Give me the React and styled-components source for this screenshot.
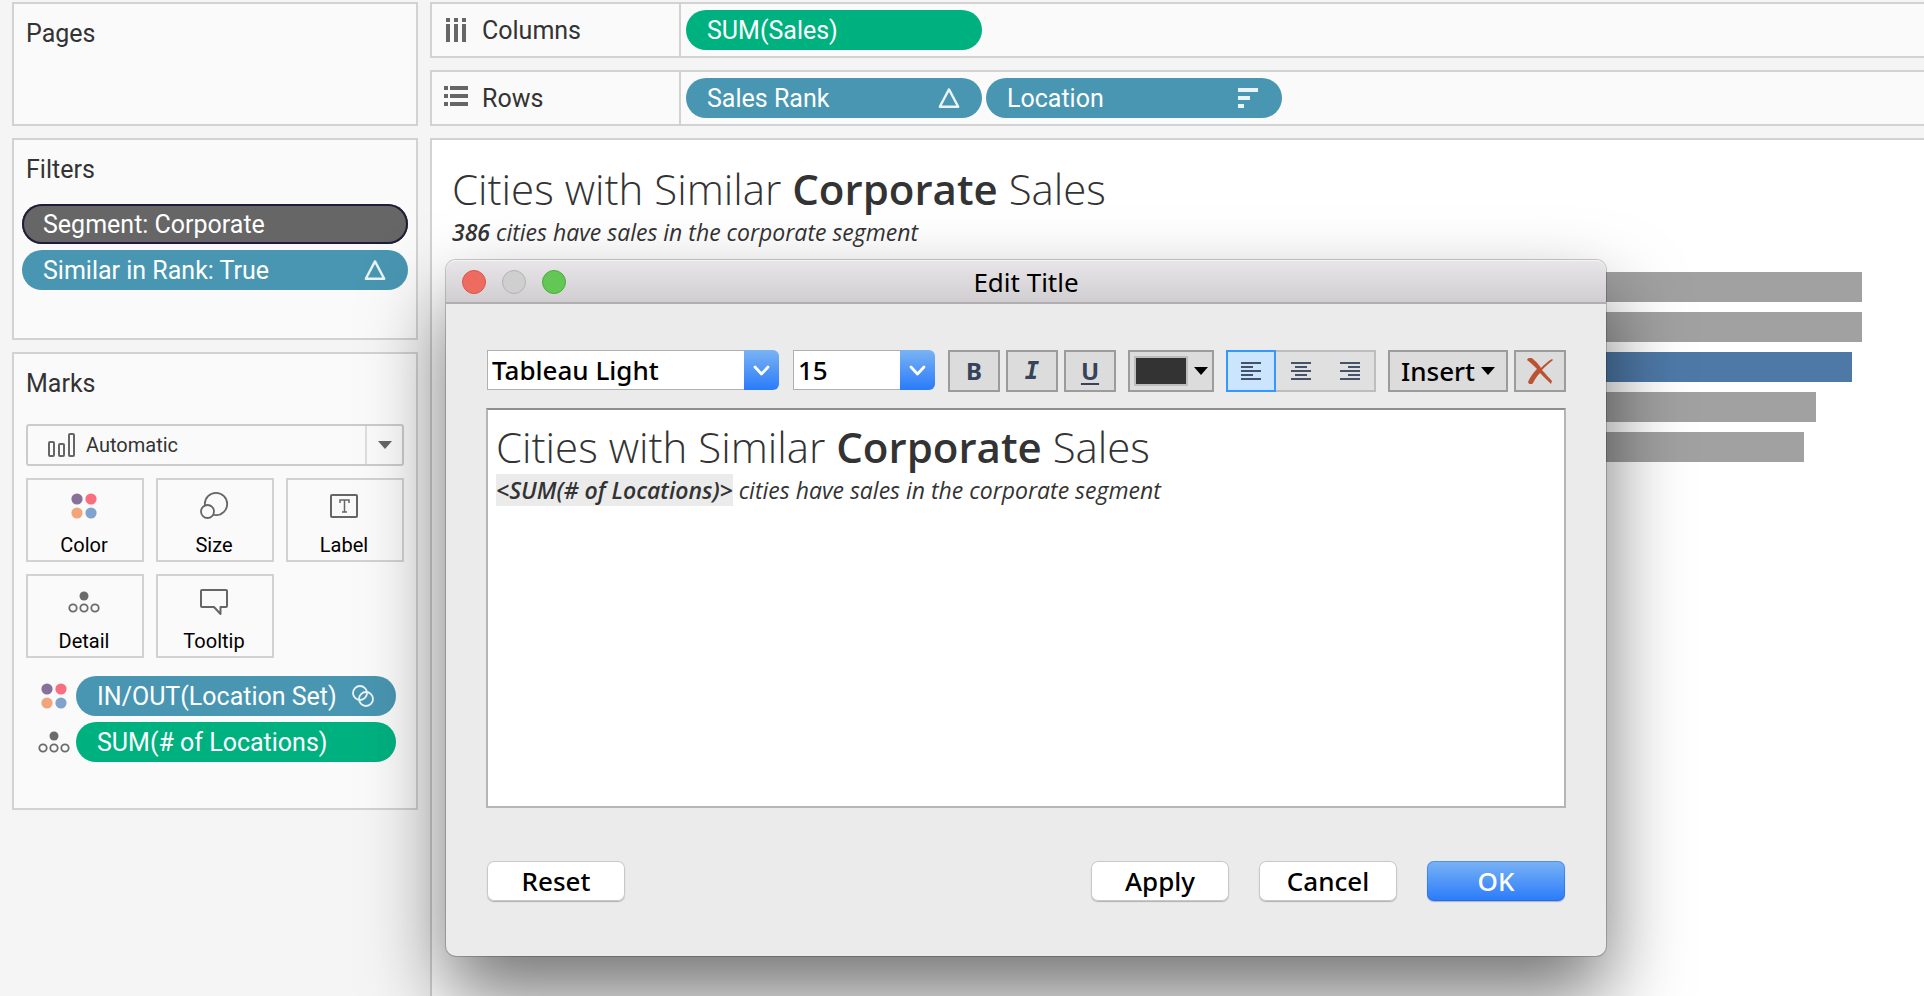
import React, { useState } from "react";
import styled, { createGlobalStyle, css } from "styled-components";

const uiFont = `"Noto Sans", "Open Sans", sans-serif`;
const shelfFont = `Roboto, "Liberation Sans", sans-serif`;

const GlobalStyle = createGlobalStyle`
    * {
        box-sizing: border-box;
    }
    body {
        margin: 0;
        background-color: #f5f5f5;
        color: #333333;
        font-family: ${shelfFont};
    }
    button, select {
        margin: 0;
        padding: 0;
        border: none;
        background: none;
        font: inherit;
        color: inherit;
        cursor: pointer;
    }
`

const Sworkspace = styled.div`
    display: flex;
    gap: 12px;
    min-height: 100vh;
    padding: 2px 0 0 12px;
    overflow: hidden;
`

const Ssidebar = styled.aside`
    display: flex;
    flex-direction: column;
    flex: none;
    gap: 12px;
    width: 406px;
`

const Scard = styled.section`
    min-height: ${(p) => p.$height};
    padding: 14px 12px 12px;
    border: 2px solid #d2d2d2;
    background-color: #fafafa;
`

const ScardTitle = styled.h2`
    margin: 0;
    font-size: 25px;
    font-weight: 400;
    line-height: 32px;
`

const SpillList = styled.div`
    display: flex;
    flex-direction: column;
    gap: 6px;
    margin: 18px -4px 0;
`

const pillColors = {
    blue: '#4996b2',
    green: '#00b180',
    gray: '#666666',
}

const Spill = styled.button`
    display: flex;
    align-items: center;
    justify-content: space-between;
    width: ${(p) => p.$width || '100%'};
    height: 40px;
    padding: 0 22px 0 21px;
    border-radius: 20px;
    background-color: ${(p) => pillColors[p.$tone]};
    color: white;
    font-size: 25px;
    white-space: nowrap;
    ${(p) => p.$selected && css`
        box-shadow: inset 0 0 0 2px #221c3a;
    `}
`

const SmarkType = styled.label`
    display: flex;
    align-items: center;
    height: 42px;
    margin-top: 24px;
    padding-left: 20px;
    border: 2px solid #cbcbcb;
    border-radius: 3px;
    font-size: 20px;
`

const SmarkSelect = styled.select`
    flex: 1;
    height: 38px;
    margin-left: 10px;
    appearance: none;
    outline: none;
`

const SmarkArrow = styled.span`
    display: flex;
    align-items: center;
    justify-content: center;
    width: 37px;
    height: 38px;
    border-left: 2px solid #dedede;
`

const SmarkGrid = styled.div`
    display: grid;
    grid-template-columns: repeat(3, 1fr);
    gap: 12px;
    margin-top: 12px;
`

const SmarkButton = styled.button`
    display: flex;
    flex-direction: column;
    align-items: center;
    justify-content: space-between;
    height: 84px;
    padding: 10px 2px 2px 0;
    border: 2px solid #d2d2d2;
    color: black;
    font-size: 20px;
    line-height: 26px;
`

const SencodingList = styled.div`
    display: flex;
    flex-direction: column;
    gap: 6px;
    margin-top: 18px;
    padding: 0 8px 0 12px;
`

const Sencoding = styled.div`
    display: flex;
    align-items: center;
    gap: 6px;
`

const Smain = styled.main`
    display: flex;
    flex: 1;
    flex-direction: column;
    gap: 12px;
    min-width: 0;
`

const Sshelf = styled.div`
    display: flex;
    height: 56px;
    border: 2px solid #d2d2d2;
    border-right: none;
    background-color: #fafafa;
`

const SshelfLabel = styled.div`
    display: flex;
    align-items: center;
    gap: 14px;
    width: 249px;
    padding-left: 12px;
    border-right: 2px solid #d2d2d2;
    font-size: 25px;
`

const SshelfPills = styled.div`
    display: flex;
    align-items: center;
    gap: 4px;
    padding-left: 5px;
`

const Sview = styled.section`
    flex: 1;
    padding: 21px 62px 0 20px;
    border: 2px solid #d2d2d2;
    border-right: none;
    border-bottom: none;
    background-color: white;
`

const Sheadline = styled.h1`
    margin: 0;
    font-family: "Open Sans", sans-serif;
    font-size: 42px;
    font-weight: 300;
    line-height: 56px;
    white-space: nowrap;
    b {
        font-weight: 600;
    }
`

const Ssubline = styled.p`
    margin: 0;
    font-family: "Open Sans", sans-serif;
    font-size: 23px;
    font-style: italic;
    font-weight: 400;
    line-height: 30px;
    white-space: nowrap;
    b {
        font-weight: 600;
    }
`

const Sfield = styled.b`
    background-color: #ebebeb;
`

const Schart = styled.div`
    display: flex;
    flex-direction: column;
    gap: 10px;
    margin-top: 25px;
`

const Sbar = styled.div`
    height: 30px;
    background-color: ${(p) => p.$inSet ? '#4e79a7' : '#a1a1a1'};
`

const Sdialog = styled.div`
    position: absolute;
    top: 260px;
    left: 446px;
    width: 1160px;
    max-width: calc(100vw - 460px);
    border-radius: 10px;
    background-color: #ebebeb;
    box-shadow: 0 0 0 1px rgba(0, 0, 0, 0.2), 0 40px 80px rgba(0, 0, 0, 0.55);
    color: black;
    font-family: ${uiFont};
    font-size: 26px;
    font-weight: 500;
`

const StitleBar = styled.header`
    display: grid;
    grid-template-columns: 1fr auto 1fr;
    align-items: center;
    height: 44px;
    padding: 2px 16px 0;
    border-bottom: 2px solid #b1aeb1;
    border-radius: 10px 10px 0 0;
    background: linear-gradient(#e9e6e9, #d1ced1);
    box-shadow: inset 0 1px 0 #f6f5f6;
`

const StitleText = styled.h2`
    margin: 0;
    font-size: 26px;
    font-weight: 400;
    line-height: 32px;
`

const Slights = styled.div`
    display: flex;
    gap: 16px;
`

const Slight = styled.button`
    width: 24px;
    height: 24px;
    border: 1px solid ${(p) => p.$edge};
    border-radius: 50%;
    background-color: ${(p) => p.$fill};
`

const SdialogBody = styled.div`
    padding: 46px 40px 55px;
`

const Stoolbar = styled.div`
    display: flex;
    align-items: flex-start;
    gap: 12px;
`

const StoolGroup = styled.div`
    display: flex;
    gap: ${(p) => p.$joined ? '0' : '6px'};
`

const Scombo = styled.label`
    display: flex;
    flex: ${(p) => p.$grow ? '1' : 'none'};
    width: ${(p) => p.$width};
    max-width: ${(p) => p.$width};
    height: 40px;
    margin: 0 1px;
`

const ScomboSelect = styled.select`
    flex: 1;
    min-width: 0;
    height: 40px;
    padding-left: 4px;
    border: 1px solid #b0b0b0;
    border-right: none;
    background-color: white;
    color: black;
    appearance: none;
    outline: none;
`

const ScomboArrow = styled.span`
    display: flex;
    align-items: center;
    justify-content: center;
    width: 35px;
    border-radius: 0 6px 6px 0;
    background: linear-gradient(#7ab3f4, #2a7bfa);
`

const Stool = styled.button`
    display: flex;
    align-items: center;
    justify-content: center;
    gap: 6px;
    width: ${(p) => p.$width || '52px'};
    height: 42px;
    border: 2px solid #9c9c9c;
    background-color: #dcdcdc;
`

const Sglyph = styled.span`
    color: #364358;
    font-family: ${(p) => p.$slab ? `"DejaVu Sans Mono", monospace` : uiFont};
    font-size: 24px;
    font-style: ${(p) => p.$slab ? 'italic' : 'normal'};
    font-weight: 700;
    line-height: 32px;
    text-decoration: ${(p) => p.$underline ? 'underline 2px' : 'none'};
    text-underline-offset: 3px;
`

const Sswatch = styled.span`
    width: 54px;
    height: 30px;
    border: 2px solid #bdbdbd;
    background-color: #333333;
`

const Salign = styled.button`
    display: flex;
    align-items: center;
    justify-content: center;
    width: 50px;
    height: 42px;
    border: 2px solid #bdbdbd;
    border-width: 2px 0;
    background-color: #e0e0e0;
    &:last-child {
        border-right-width: 2px;
    }
    ${(p) => p.$active && css`
        border: 2px solid #3399fc;
        background-color: #cbe5ff;
    `}
`

const Seditor = styled.div`
    height: 400px;
    margin-top: 16px;
    padding: 9px 8px;
    border: 2px solid #b5b5b5;
    border-top-color: #8e8e8e;
    background-color: white;
    color: #333333;
    outline: none;
    overflow: hidden;
`

const Sfooter = styled.footer`
    display: flex;
    gap: 30px;
    margin-top: 53px;
    padding: 0 1px;
`

const SpushButton = styled.button`
    width: 138px;
    height: 40px;
    border-radius: 7px;
    background: ${(p) => p.$primary ? 'linear-gradient(#7ab3f4, #2a7bfa)' : 'white'};
    box-shadow: ${(p) => p.$primary ? 'inset 0 0 0 1px rgba(20, 90, 240, 0.4)' : 'inset 0 0 0 1px #c8c8c8'}, 0 1px 1px rgba(0, 0, 0, 0.25);
    color: ${(p) => p.$primary ? 'white' : 'black'};
    line-height: 32px;
    &:first-child {
        margin-right: auto;
    }
`

const ColumnsIcon = () => (
    <svg width="24" height="24" fill="#666666">
        <path d="M2 0h4v4H2zM10 0h4v4h-4zM18 0h4v4h-4zM2 6h4v18H2zM10 6h4v18h-4zM18 6h4v18h-4z" />
    </svg>
)

const RowsIcon = () => (
    <svg width="24" height="24" fill="#666666">
        <path d="M0 0h4v4H0zM0 8h4v4H0zM0 16h4v4H0zM6 0h18v4H6zM6 8h18v4H6zM6 16h18v4H6z" />
    </svg>
)

const DeltaIcon = () => (
    <svg width="22" height="22" fill="none" stroke="#eaf3f6" strokeWidth="2.4" strokeLinejoin="round">
        <path d="M11 2.4L1.8 19.8h18.4z" />
    </svg>
)

const SortIcon = () => (
    <svg width="22" height="22" fill="#eaf3f6">
        <path d="M0 1h20v4H0zM0 9h12v4H0zM0 17h6v4H0z" />
    </svg>
)

const SetIcon = () => (
    <svg width="22" height="22" fill="none" stroke="#eaf3f6" strokeWidth="1.8">
        <circle cx="8" cy="8" r="7" />
        <circle cx="14" cy="14" r="7" />
    </svg>
)

const ColorIcon = () => (
    <svg width="32" height="32">
        <circle cx="9" cy="9" r="5.6" fill="#87709a" />
        <circle cx="23" cy="9" r="5.6" fill="#f96f80" />
        <circle cx="9" cy="23" r="5.6" fill="#f2a57a" />
        <circle cx="23" cy="23" r="5.6" fill="#80a3cb" />
    </svg>
)

const DetailIcon = () => (
    <svg width="32" height="32" fill="none" stroke="#6b6b6b" strokeWidth="1.8">
        <circle cx="16" cy="10" r="4.5" fill="#6b6b6b" stroke="none" />
        <circle cx="5" cy="22" r="3.7" />
        <circle cx="16" cy="22" r="3.7" />
        <circle cx="27" cy="22" r="3.7" />
    </svg>
)

const SizeIcon = () => (
    <svg width="32" height="32" fill="none" stroke="#666666" strokeWidth="1.8">
        <circle cx="18" cy="14" r="11.2" />
        <circle cx="9.5" cy="21.5" r="6.5" fill="#fafafa" />
    </svg>
)

const LabelIcon = () => (
    <svg width="32" height="32" fill="none" stroke="#666666" strokeWidth="2">
        <rect x="3" y="5" width="26" height="22" rx="1" />
        <path d="M12 13v-3h9v3M16.500 10v12M14 22h5" strokeWidth="1.5" />
    </svg>
)

const TooltipIcon = () => (
    <svg width="32" height="32" fill="none" stroke="#666666" strokeWidth="2" strokeLinejoin="round">
        <path d="M4 4h24a1 1 0 0 1 1 1v15a1 1 0 0 1-1 1h-5.500v7l-6.500-7h-12a1 1 0 0 1-1-1v-15a1 1 0 0 1 1-1z" />
    </svg>
)

const BarsIcon = () => (
    <svg width="28" height="26" fill="none" stroke="#666666" strokeWidth="2">
        <rect x="1" y="10" width="5" height="14" rx="1" />
        <rect x="11" y="12" width="5" height="12" rx="1" />
        <rect x="21" y="2" width="5" height="22" rx="1" />
    </svg>
)

const ArrowIcon = ({ color = 'black' }) => (
    <svg width="14" height="8" fill={color}>
        <path d="M0 0h14L7 8z" />
    </svg>
)

const ChevronIcon = () => (
    <svg width="17" height="11" fill="none" stroke="white" strokeWidth="2.800" strokeLinecap="round" strokeLinejoin="round">
        <path d="M2 2l6.500 7L15 2" />
    </svg>
)

const alignPaths = {
    left: 'M0 0h20v2H0zM0 4h12v2H0zM0 8h20v2H0zM0 12h12v2H0zM0 16h20v2H0z',
    center: 'M0 0h20v2H0zM4 4h12v2H4zM0 8h20v2H0zM4 12h12v2H4zM0 16h20v2H0z',
    right: 'M0 0h20v2H0zM8 4h12v2H8zM0 8h20v2H0zM8 12h12v2H8zM0 16h20v2H0z',
}

const AlignIcon = ({ side }) => (
    <svg width="20" height="18" fill="#44536a">
        <path d={alignPaths[side]} />
    </svg>
)

const ClearIcon = () => (
    <svg width="26" height="26" fill="#bb5333">
        <path d="M0 2C1-1 5-1 7 2c3 2 5 5 7 8 3-3 7-7 11-9l1 1c-4 3-8 7-11 10 4 4 7 8 10 11l-1 3c-4-4-8-8-11-11-3 3-5 6-7 10-1 2-4 2-5-1 2-5 5-9 9-13C7 8 4 5 0 2z" />
    </svg>
)

const markButtons = [
    { name: 'Color', Icon: ColorIcon },
    { name: 'Size', Icon: SizeIcon },
    { name: 'Label', Icon: LabelIcon },
    { name: 'Detail', Icon: DetailIcon },
    { name: 'Tooltip', Icon: TooltipIcon },
]

const cities = [
    { id: 1, sales: 1410 },
    { id: 2, sales: 1410 },
    { id: 3, sales: 1400, inSet: true },
    { id: 4, sales: 1364 },
    { id: 5, sales: 1352 },
]
const maxSales = 1410;

const Sidebar = () => {
    return (
        <Ssidebar>
            <Scard $height="124px">
                <ScardTitle>Pages</ScardTitle>
            </Scard>
            <Scard $height="202px">
                <ScardTitle>Filters</ScardTitle>
                <SpillList>
                    <Spill $tone="gray" $selected>Segment: Corporate</Spill>
                    <Spill $tone="blue">Similar in Rank: True<DeltaIcon /></Spill>
                </SpillList>
            </Scard>
            <Scard $height="458px">
                <ScardTitle>Marks</ScardTitle>
                <SmarkType>
                    <BarsIcon />
                    <SmarkSelect aria-label="Mark type">
                        <option>Automatic</option>
                    </SmarkSelect>
                    <SmarkArrow><ArrowIcon color="#666666" /></SmarkArrow>
                </SmarkType>
                <SmarkGrid>
                    {markButtons.map(({ name, Icon }) => (
                        <SmarkButton key={name}><Icon />{name}</SmarkButton>
                    ))}
                </SmarkGrid>
                <SencodingList>
                    <Sencoding>
                        <ColorIcon />
                        <Spill $tone="blue" $width="320px">IN/OUT(Location Set)<SetIcon /></Spill>
                    </Sencoding>
                    <Sencoding>
                        <DetailIcon />
                        <Spill $tone="green" $width="320px">SUM(# of Locations)</Spill>
                    </Sencoding>
                </SencodingList>
            </Scard>
        </Ssidebar>
    )
}

const EditTitle = () => {
    const [align, setAlign] = useState('left');

    return (
        <Sdialog role="dialog" aria-labelledby="dialog-title">
            <StitleBar>
                <Slights>
                    <Slight $fill="#ee6b60" $edge="#d9564c" aria-label="Close" />
                    <Slight $fill="#d0cfd0" $edge="#b4b3b4" aria-label="Minimize" />
                    <Slight $fill="#62c755" $edge="#4bab3e" aria-label="Zoom" />
                </Slights>
                <StitleText id="dialog-title">Edit Title</StitleText>
            </StitleBar>
            <SdialogBody>
                <Stoolbar>
                    <Scombo $width="292px" $grow>
                        <ScomboSelect aria-label="Font">
                            <option>Tableau Light</option>
                        </ScomboSelect>
                        <ScomboArrow><ChevronIcon /></ScomboArrow>
                    </Scombo>
                    <Scombo $width="142px">
                        <ScomboSelect aria-label="Font size">
                            <option>15</option>
                        </ScomboSelect>
                        <ScomboArrow><ChevronIcon /></ScomboArrow>
                    </Scombo>
                    <StoolGroup>
                        <Stool aria-label="Bold"><Sglyph>B</Sglyph></Stool>
                        <Stool aria-label="Italic"><Sglyph $slab>I</Sglyph></Stool>
                        <Stool aria-label="Underline"><Sglyph $underline>U</Sglyph></Stool>
                    </StoolGroup>
                    <Stool $width="86px" aria-label="Text color"><Sswatch /><ArrowIcon /></Stool>
                    <StoolGroup $joined>
                        {['left', 'center', 'right'].map((side) => (
                            <Salign
                                key={side}
                                $active={align === side}
                                aria-label={`Align ${side}`}
                                onClick={() => { setAlign(side) }}
                            >
                                <AlignIcon side={side} />
                            </Salign>
                        ))}
                    </StoolGroup>
                    <StoolGroup>
                        <Stool $width="120px">Insert<ArrowIcon /></Stool>
                        <Stool aria-label="Clear"><ClearIcon /></Stool>
                    </StoolGroup>
                </Stoolbar>
                <Seditor
                    role="textbox"
                    aria-multiline="true"
                    aria-label="Title text"
                    contentEditable
                    suppressContentEditableWarning
                    spellCheck={false}
                    style={{ textAlign: align }}
                >
                    <Sheadline as="div">Cities with Similar <b>Corporate</b> Sales</Sheadline>
                    <Ssubline as="div"><Sfield>&lt;SUM(# of Locations)&gt;</Sfield> cities have sales in the corporate segment</Ssubline>
                </Seditor>
                <Sfooter>
                    <SpushButton>Reset</SpushButton>
                    <SpushButton>Apply</SpushButton>
                    <SpushButton>Cancel</SpushButton>
                    <SpushButton $primary>OK</SpushButton>
                </Sfooter>
            </SdialogBody>
        </Sdialog>
    )
}

const App = () => {
    return (
        <>
            <GlobalStyle />
            <Sworkspace>
                <Sidebar />
                <Smain>
                    <Sshelf>
                        <SshelfLabel><ColumnsIcon />Columns</SshelfLabel>
                        <SshelfPills>
                            <Spill $tone="green" $width="296px">SUM(Sales)</Spill>
                        </SshelfPills>
                    </Sshelf>
                    <Sshelf>
                        <SshelfLabel><RowsIcon />Rows</SshelfLabel>
                        <SshelfPills>
                            <Spill $tone="blue" $width="296px">Sales Rank<DeltaIcon /></Spill>
                            <Spill $tone="blue" $width="296px">Location<SortIcon /></Spill>
                        </SshelfPills>
                    </Sshelf>
                    <Sview>
                        <Sheadline>Cities with Similar <b>Corporate</b> Sales</Sheadline>
                        <Ssubline><b>386</b> cities have sales in the corporate segment</Ssubline>
                        <Schart>
                            {cities.map((city) => (
                                <Sbar
                                    key={city.id}
                                    $inSet={city.inSet}
                                    style={{ width: `${(city.sales / maxSales) * 100}%` }}
                                />
                            ))}
                        </Schart>
                    </Sview>
                </Smain>
            </Sworkspace>
            <EditTitle />
        </>
    )
}

export default App;
